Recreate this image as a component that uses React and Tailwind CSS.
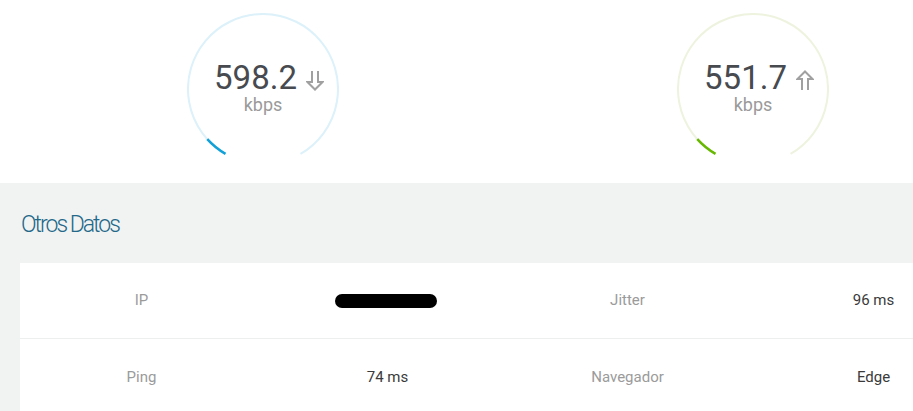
import React from "react";

function Arrow({ up }) {
  return (
    <svg width="18" height="21" viewBox="0 0 18 21" className="ml-[9px] mt-[8px]">
      <path
        d={up ? "M6 20 V9 H1.5 L9 1.5 L16.5 9 H12 V20" : "M6 1 V12 H1.5 L9 19.5 L16.5 12 H12 V1"}
        fill="none"
        stroke="#a0a0a0"
        strokeWidth="2"
        strokeLinejoin="miter"
      />
    </svg>
  );
}

function Gauge({ value, up, track, color }) {
  return (
    <div className="relative w-[152px] h-[152px]">
      <svg width="152" height="152" viewBox="0 0 152 152" className="absolute inset-0">
        <path
          d="M38.5 140.95 A75 75 0 1 1 113.5 140.95"
          fill="none"
          stroke={track}
          strokeWidth="2"
        />
        <path
          d="M38.5 140.95 A75 75 0 0 1 20.3 126.2"
          fill="none"
          stroke={color}
          strokeWidth="2.5"
        />
      </svg>
      <div className="relative flex flex-col items-center pt-[49px]">
        <div className="flex items-start pl-[12px]">
          <span className="text-[33px] leading-[32px] text-[#474a4f]">{value}</span>
          <Arrow up={up} />
        </div>
        <span className="text-[18px] leading-[22px] text-[#9a9a9a]">kbps</span>
      </div>
    </div>
  );
}

const rows = [
  [
    { label: "IP" },
    { blot: true },
    { label: "Jitter" },
    { value: "96 ms" },
  ],
  [
    { label: "Ping" },
    { value: "74 ms" },
    { label: "Navegador" },
    { value: "Edge" },
  ],
];

export default function App() {
  return (
    <div
      className="w-[913px] h-[411px] overflow-hidden bg-[#f1f2f2]"
      style={{ fontFamily: "Roboto, 'Open Sans', sans-serif" }}
    >
      <div className="w-[1012px]">
        <div className="h-[183px] bg-white flex pl-[187px] pt-[13px] gap-[338px]">
          <Gauge value="598.2" track="#dcf1fa" color="#12a0d8" />
          <Gauge value="551.7" up track="#eef3df" color="#66b800" />
        </div>

        <div className="pt-[28px]">
          <h2 className="pl-[21px] text-[23px] leading-[28px] font-light tracking-[-2px] text-[#236889]">
            Otros Datos
          </h2>
          <div className="ml-[20px] mt-[24px] w-[972px] bg-white">
            {rows.map((row, i) => (
              <div
                key={i}
                className={
                  "grid grid-cols-4 h-[76px] items-center text-[15px] " +
                  (i === 0 ? "border-b border-[#edefef]" : "")
                }
              >
                {row.map((cell, j) => (
                  <div key={j} className="flex justify-center">
                    {cell.label && <span className="text-[#9b9b9b]">{cell.label}</span>}
                    {cell.value && <span className="text-[#3a3a3a] pl-[6px]">{cell.value}</span>}
                    {cell.blot && (
                      <span className="block w-[102px] h-[14px] rounded-full bg-black ml-[3px]" />
                    )}
                  </div>
                ))}
              </div>
            ))}
          </div>
        </div>
      </div>
    </div>
  );
}
